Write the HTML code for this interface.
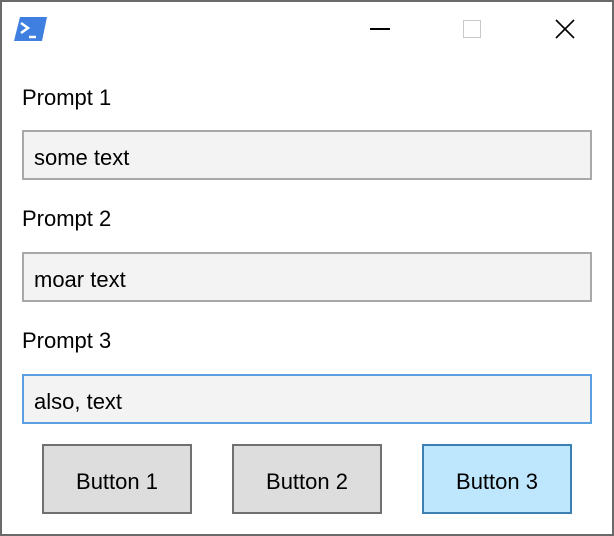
<!DOCTYPE html>
<html><head><style>
body{margin:0;width:614px;height:536px;overflow:hidden;background:#fff;font-family:"Liberation Sans",sans-serif;}
.win{position:absolute;left:0;top:0;width:610px;height:532px;border:2px solid #6a6a6a;}
.lbl{position:absolute;left:22px;font-size:22px;color:#000;line-height:24px;}
.tb{position:absolute;left:22px;width:556px;height:46px;background:#f3f3f3;border:2px solid #a8a8a8;font-size:22px;line-height:52px;padding-left:10px;box-sizing:content-box;}
.btn{position:absolute;top:444px;width:146px;height:66px;background:#dddddd;border:2px solid #707070;font-size:22px;text-align:center;line-height:72px;}
</style></head><body>
<div class="win"></div>
<svg style="position:absolute;left:14px;top:16px" width="34" height="26" viewBox="0 0 34 26">
<polygon points="6,1 33,1 28,25 0,25" fill="#3f7fe0"/>
<path d="M7,7 L14,12 L7,17" stroke="#fff" stroke-width="2.5" fill="none"/>
<path d="M15,21 L22,21" stroke="#fff" stroke-width="2.5"/>
</svg>
<div style="position:absolute;left:370px;top:28px;width:20px;height:2px;background:#000"></div>
<div style="position:absolute;left:463px;top:20px;width:16px;height:16px;border:1px solid #c8c8c8"></div>
<svg style="position:absolute;left:554px;top:18px" width="22" height="22"><path d="M2,2 L20,20 M20,2 L2,20" stroke="#000" stroke-width="1.6"/></svg>
<div class="lbl" style="top:86px">Prompt 1</div>
<div class="tb" style="top:130px">some text</div>
<div class="lbl" style="top:207px">Prompt 2</div>
<div class="tb" style="top:252px">moar text</div>
<div class="lbl" style="top:329px">Prompt 3</div>
<div class="tb" style="top:374px;border-color:#5a9fe0">also, text</div>
<div class="btn" style="left:42px">Button 1</div>
<div class="btn" style="left:232px">Button 2</div>
<div class="btn" style="left:422px;background:#bee6fd;border-color:#3c7fb1">Button 3</div>
</body></html>
